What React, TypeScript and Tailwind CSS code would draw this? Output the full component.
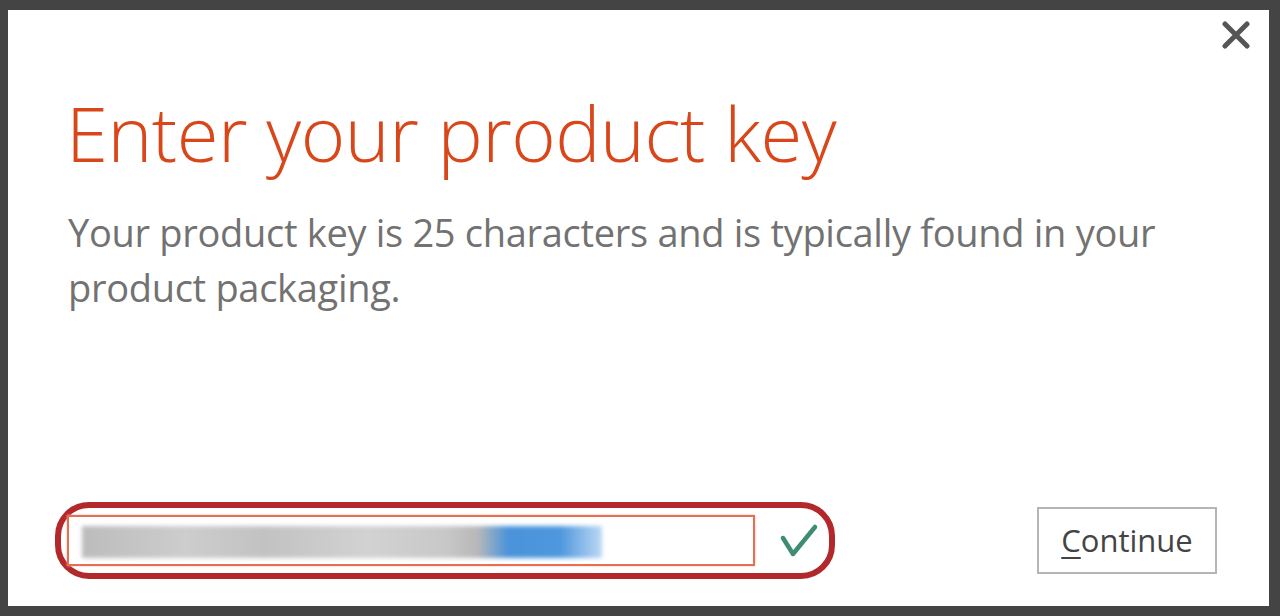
import React from 'react';

function CloseIcon() {
  return (
    <svg width="28" height="28" viewBox="0 0 28 28" className="block">
      <path d="M3 3 L25 25 M25 3 L3 25" stroke="#555555" strokeWidth="5" strokeLinecap="round" />
    </svg>
  );
}

function CheckIcon() {
  return (
    <svg width="40" height="36" viewBox="0 0 40 36" className="block">
      <path d="M4 15 L14 31 L36 4" fill="none" stroke="#3f8c74" strokeWidth="4.5" strokeLinecap="round" strokeLinejoin="round" />
    </svg>
  );
}

export default function App() {
  return (
    <div className="w-full h-[616px] bg-[#444444] pt-[10px] pl-[8px] pr-[11px] pb-[10px]" style={{ fontFamily: '"Open Sans", "Noto Sans", sans-serif' }}>
      <div className="relative h-full bg-white flex flex-col">
        <button className="absolute top-[11px] right-[19px]" aria-label="Close">
          <CloseIcon />
        </button>

        <h1 className="mt-[85px] ml-[58px] text-[76px] font-light leading-none text-[#d9461a] tracking-[-0.5px]">
          Enter your product key
        </h1>

        <p className="mt-[34px] ml-[60px] text-[38px] leading-[55px] text-[#727272] tracking-[-0.3px]">
          Your product key is 25 characters and is typically found in your
          <br />
          product packaging.
        </p>

        <div className="mt-auto mb-[27px] ml-[47px] mr-[52px] flex items-center justify-between">
          <div className="flex items-center h-[77px] w-[780px] border-[6px] border-[#b3282b] rounded-[34px] pl-[6px]">
            <div className="h-[51px] w-[688px] border-2 border-[#e56f52] shadow-[0_0_2px_#f3b3a2] pl-[13px] pt-[9px]">
              <div className="h-[32px] w-[520px] blur-[2px] bg-[linear-gradient(90deg,#bcbcbc_0%,#cdcdcd_20%,#c2c2c2_35%,#d2d2d2_55%,#c8c8c8_70%,#b8b8b8_76%,#4a93dc_82%,#4f98de_92%,#bcd8f4_100%)]" />
            </div>
            <div className="ml-[24px]">
              <CheckIcon />
            </div>
          </div>

          <button className="h-[67px] w-[180px] border-2 border-[#b5b5b5] bg-white text-[31px] text-[#444444] leading-none">
            <span className="underline decoration-2 underline-offset-[5px]">C</span>ontinue
          </button>
        </div>
      </div>
    </div>
  );
}
